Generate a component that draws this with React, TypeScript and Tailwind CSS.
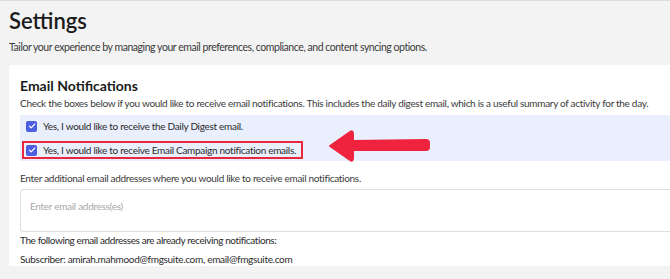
import React from "react";

function CheckBox() {
  return (
    <span className="flex h-[11px] w-[11px] shrink-0 items-center justify-center rounded-[2px] bg-[#4b5fe0]">
      <svg width="8" height="8" viewBox="0 0 10 10" fill="none">
        <path d="M1.8 5.2 L4 7.3 L8.3 2.6" stroke="white" strokeWidth="1.6" strokeLinecap="round" strokeLinejoin="round" />
      </svg>
    </span>
  );
}

export default function App() {
  return (
    <div
      className="h-screen overflow-hidden border-t border-[#dcdcdc] bg-[#f3f3f3] pl-[9px] text-[#2a2a2a]"
      style={{ fontFamily: "Lato, 'Noto Sans', sans-serif" }}
    >
      {/* Page header */}
      <h1 className="pt-[6px] text-[22px] font-semibold leading-[28px] text-[#1b1b1b]">Settings</h1>
      <p className="mt-[5px] whitespace-nowrap text-[10.5px] leading-[14px] tracking-[-0.45px] text-[#3a3a3a]">
        Tailor your experience by managing your email preferences, compliance, and content syncing options.
      </p>

      {/* Card */}
      <div className="mt-[11px] rounded-tl-[3px] bg-white pl-[11px] pt-[12px]">
        <h2 className="text-[14px] font-bold leading-[18px] text-[#1b1b1b]">Email Notifications</h2>
        <p className="mt-[1px] whitespace-nowrap text-[10px] leading-[14px] tracking-[-0.3px] text-[#3a3a3a]">
          Check the boxes below if you would like to receive email notifications. This includes the daily digest email, which is a useful summary of activity for the day.
        </p>

        <div className="relative mt-[5px] flex flex-col gap-[8px] bg-[#e9effd] pb-[2px] pl-[2px] pt-[4px]">
          <label className="flex items-center gap-[6px] pl-[4px] text-[10px] leading-[14px] tracking-[-0.3px] text-[#2a2a2a]">
            <CheckBox />
            Yes, I would like to receive the Daily Digest email.
          </label>
          <label className="flex w-[281px] items-center gap-[6px] whitespace-nowrap border-2 border-[#e8273f] pl-[2px] text-[10px] leading-[14px] tracking-[-0.3px] text-[#2a2a2a]">
            <CheckBox />
            Yes, I would like to receive Email Campaign notification emails.
          </label>

          {/* Annotation arrow */}
          <svg className="absolute left-[306px] top-[14px]" width="106" height="36" viewBox="0 0 106 36">
            <path
              d="M4 17 L24 3 Q27 1 27 5 L27 12 L100 11 Q103 11 103 14 L103 18 Q103 21 100 21 L27 21 L27 29 Q27 33 24 31 Z"
              fill="#f0233f"
              stroke="#f0233f"
              strokeWidth="2"
              strokeLinejoin="round"
            />
          </svg>
        </div>

        <p className="mt-[10px] whitespace-nowrap text-[10px] leading-[14px] tracking-[-0.3px] text-[#3a3a3a]">
          Enter additional email addresses where you would like to receive email notifications.
        </p>
        <div className="mt-[4px] h-[43px] rounded-l-[4px] border border-r-0 border-[#dedede] pl-[9px] pt-[10px]">
          <span className="block text-[10px] leading-[12px] tracking-[-0.3px] text-[#a9a9a9]">Enter email address(es)</span>
        </div>
        <p className="mt-[1px] whitespace-nowrap text-[10px] leading-[14px] tracking-[-0.4px] text-[#2a2a2a]">
          The following email addresses are already receiving notifications:
        </p>
        <p className="mt-[5px] whitespace-nowrap text-[10px] leading-[14px] tracking-[-0.3px] text-[#2a2a2a]">
          Subscriber: amirah.mahmood@fmgsuite.com, email@fmgsuite.com
        </p>
      </div>
    </div>
  );
}
